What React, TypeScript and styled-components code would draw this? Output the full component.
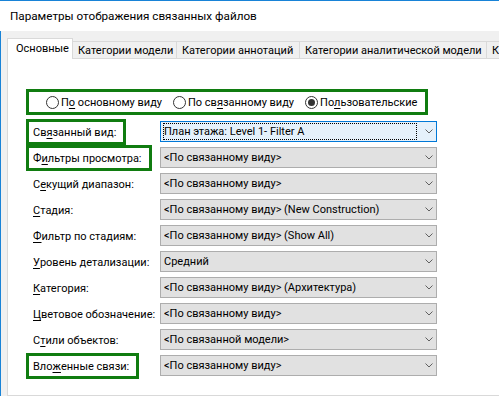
import React from "react";
import styled, { createGlobalStyle } from "styled-components";

const GlobalStyle = createGlobalStyle`
  html, body { margin: 0; padding: 0; background: #ffffff; }
  body { font-family: Roboto, "Noto Sans", sans-serif; }
`;

const FONT = `Roboto, "Noto Sans", sans-serif`;

const Window = styled.div`
  width: 499px;
  height: 396px;
  overflow: hidden;
  box-sizing: border-box;
  display: flex;
  flex-direction: column;
  background: #f0f0f0;
  border-top: 1px solid #1883d7;
  font-family: ${FONT};
  color: #000;
`;

const TitleBar = styled.div`
  height: 30px;
  flex: none;
  background: #ffffff;
  display: flex;
  align-items: center;
  padding-left: 10px;
  font-size: 11.7px;
`;

const Body = styled.div`
  flex: 1;
  display: flex;
  flex-direction: column;
  border-left: 1px solid #1883d7;
  padding: 7px 0 0 6px;
  min-width: 0;
`;

const TabStrip = styled.div`
  display: flex;
  align-items: flex-end;
  height: 21px;
  margin-bottom: -1px;
  position: relative;
  z-index: 1;
  white-space: nowrap;
`;

const Tab = styled.div<{ $active?: boolean; $w: number }>`
  flex: none;
  width: ${(p) => p.$w}px;
  box-sizing: border-box;
  height: ${(p) => (p.$active ? 21 : 18)}px;
  border: 1px solid #d9d9d9;
  border-bottom: ${(p) => (p.$active ? "none" : "1px solid #d9d9d9")};
  border-left: ${(p) => (p.$active ? "1px solid #d9d9d9" : "none")};
  background: ${(p) => (p.$active ? "#ffffff" : "#f0f0f0")};
  display: flex;
  align-items: ${(p) => (p.$active ? "flex-start" : "center")};
  padding: ${(p) => (p.$active ? "3px 0 0 8px" : "0 0 0 5px")};
  font-size: 11px;
  overflow: hidden;
`;

const Panel = styled.div`
  flex: 1;
  width: 560px;
  background: #ffffff;
  border: 1px solid #d9d9d9;
  padding: 30px 0 0 18px;
`;

const RadioBox = styled.div`
  width: 402px;
  height: 26px;
  box-sizing: border-box;
  border: 3px solid #107c10;
  display: flex;
  align-items: center;
  gap: 11px;
  padding-left: 17px;
  font-size: 11px;
`;

const RadioItem = styled.label`
  display: inline-flex;
  align-items: center;
  gap: 2px;
  white-space: nowrap;
`;

const RadioCircle = styled.span<{ $checked?: boolean }>`
  width: 13px;
  height: 13px;
  box-sizing: border-box;
  border-radius: 50%;
  border: 1px solid #333333;
  background: #ffffff;
  display: inline-flex;
  align-items: center;
  justify-content: center;
  &::after {
    content: "";
    width: 7px;
    height: 7px;
    border-radius: 50%;
    background: #333333;
    display: ${(p) => (p.$checked ? "block" : "none")};
  }
`;

const Grid = styled.div`
  margin-top: 4px;
  display: grid;
  grid-template-columns: 134px 277px;
  grid-auto-rows: 26px;
`;

const Label = styled.div<{ $mark?: boolean }>`
  justify-self: start;
  height: 26px;
  box-sizing: border-box;
  border: 3px solid ${(p) => (p.$mark ? "#107c10" : "transparent")};
  padding: 0 7px 0 4px;
  display: flex;
  align-items: center;
  font-size: 11px;
  white-space: nowrap;
`;

const Key = styled.span`
  text-decoration: underline;
  text-underline-offset: 2px;
`;

const Select = styled.div<{ $focused?: boolean }>`
  margin-top: 2px;
  height: 21px;
  box-sizing: border-box;
  border: 1px solid ${(p) => (p.$focused ? "#0078d7" : "#adadad")};
  background: ${(p) => (p.$focused ? "#e5f1fb" : "#e1e1e1")};
  display: flex;
  align-items: center;
  padding: 0 3px 0 2px;
  font-size: 11px;
  white-space: nowrap;
`;

const Value = styled.div<{ $focused?: boolean }>`
  flex: 1;
  height: 17px;
  box-sizing: border-box;
  border: 1px dotted ${(p) => (p.$focused ? "#000000" : "transparent")};
  display: flex;
  align-items: center;
  overflow: hidden;
`;

const Chevron = styled.svg`
  flex: none;
  margin-left: 8px;
`;

const ChevronIcon = () => (
  <Chevron width="8" height="5" viewBox="0 0 8 5">
    <polyline points="0.5,0.5 4,4 7.5,0.5" fill="none" stroke="#606060" strokeWidth="1" />
  </Chevron>
);

type Row = { label: React.ReactNode; value: string; mark?: boolean; focused?: boolean };

const rows: Row[] = [
  { label: <>Св<Key>я</Key>занный вид:</>, value: "План этажа: Level 1- Filter A", mark: true, focused: true },
  { label: <>Ф<Key>и</Key>льтры просмотра:</>, value: "<По связанному виду>", mark: true },
  { label: <>С<Key>е</Key>кущий диапазон:</>, value: "<По связанному виду>" },
  { label: <><Key>С</Key>тадия:</>, value: "<По связанному виду> (New Construction)" },
  { label: <><Key>Ф</Key>ильтр по стадиям:</>, value: "<По связанному виду> (Show All)" },
  { label: <><Key>У</Key>ровень детализации:</>, value: "Средний" },
  { label: <><Key>К</Key>атегория:</>, value: "<По связанному виду> (Архитектура)" },
  { label: <><Key>Ц</Key>ветовое обозначение:</>, value: "<По связанному виду>" },
  { label: <>С<Key>т</Key>или объектов:</>, value: "<По связанной модели>" },
  { label: <>Вло<Key>ж</Key>енные связи:</>, value: "<По связанному виду>", mark: true },
];

const tabs = [
  { title: "Основные", w: 66, active: true },
  { title: "Категории модели", w: 104 },
  { title: "Категории аннотаций", w: 123 },
  { title: "Категории аналитической модели", w: 187 },
  { title: "Категории импорта", w: 120 },
];

export default function App() {
  return (
    <>
      <GlobalStyle />
      <Window>
        <TitleBar>Параметры отображения связанных файлов</TitleBar>
        <Body>
          <TabStrip>
            {tabs.map((t) => (
              <Tab key={t.title} $active={t.active} $w={t.w}>
                {t.title}
              </Tab>
            ))}
          </TabStrip>
          <Panel>
            <RadioBox>
              <RadioItem>
                <RadioCircle />
                <span>
                  П<Key>о</Key> основному виду
                </span>
              </RadioItem>
              <RadioItem>
                <RadioCircle />
                <span>
                  По св<Key>я</Key>занному виду
                </span>
              </RadioItem>
              <RadioItem>
                <RadioCircle $checked />
                <span>
                  По<Key>л</Key>ьзовательские
                </span>
              </RadioItem>
            </RadioBox>
            <Grid>
              {rows.map((r, i) => (
                <React.Fragment key={i}>
                  <Label $mark={r.mark}>{r.label}</Label>
                  <Select $focused={r.focused}>
                    <Value $focused={r.focused}>{r.value}</Value>
                    <ChevronIcon />
                  </Select>
                </React.Fragment>
              ))}
            </Grid>
          </Panel>
        </Body>
      </Window>
    </>
  );
}
